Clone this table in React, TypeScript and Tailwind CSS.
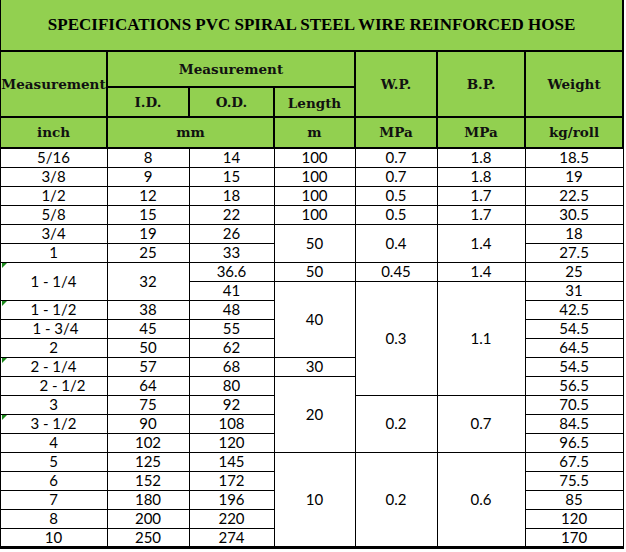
type Cell = { v: string; rs?: number; cls?: string; mark?: boolean } | null;

const c = (v: string, rs?: number): Cell => ({ v, rs });

// inch, I.D., O.D., Length, W.P., B.P., Weight
const rows: Cell[][] = [
  [c("5/16"), c("8"), c("14"), c("100"), c("0.7"), c("1.8"), c("18.5")],
  [c("3/8"), c("9"), c("15"), c("100"), c("0.7"), c("1.8"), c("19")],
  [c("1/2"), c("12"), c("18"), c("100"), c("0.5"), c("1.7"), c("22.5")],
  [c("5/8"), c("15"), c("22"), c("100"), c("0.5"), c("1.7"), c("30.5")],
  [c("3/4"), c("19"), c("26"), c("50", 2), c("0.4", 2), c("1.4", 2), c("18")],
  [c("1"), c("25"), c("33"), null, null, null, c("27.5")],
  [{ v: "1 - 1/4", rs: 2, mark: true }, c("32", 2), c("36.6"), c("50"), c("0.45"), c("1.4"), c("25")],
  [null, null, c("41"), c("40", 4), c("0.3", 6), c("1.1", 6), c("31")],
  [{ v: "1 - 1/2", mark: true }, c("38"), c("48"), null, null, null, c("42.5")],
  [{ v: "1 - 3/4", cls: "pl-[4px]" }, c("45"), c("55"), null, null, null, c("54.5")],
  [c("2"), c("50"), c("62"), null, null, null, c("64.5")],
  [{ v: "2 - 1/4", mark: true }, c("57"), c("68"), c("30"), null, null, c("54.5")],
  [{ v: "2 - 1/2", cls: "pl-[18px]" }, c("64"), c("80"), c("20", 4), null, null, c("56.5")],
  [c("3"), c("75"), c("92"), null, c("0.2", 3), c("0.7", 3), c("70.5")],
  [{ v: "3 - 1/2", mark: true }, c("90"), c("108"), null, null, null, c("84.5")],
  [c("4"), c("102"), c("120"), null, null, null, c("96.5")],
  [c("5"), c("125"), c("145"), c("10", 5), c("0.2", 5), c("0.6", 5), c("67.5")],
  [c("6"), c("152"), c("172"), null, null, null, c("75.5")],
  [c("7"), c("180"), c("196"), null, null, null, c("85")],
  [c("8"), c("200"), c("220"), null, null, null, c("120")],
  [c("10"), c("250"), c("274"), null, null, null, c("170")],
];

const head = "border-2 border-black bg-[#92d050] text-center align-middle font-bold text-[#111] p-0";

export default function App() {
  return (
    <div className="w-[626px] h-[552px] overflow-hidden bg-white">
      <table
        className="table-fixed border-collapse w-[623px] -ml-px"
        style={{ fontFamily: "Lato, 'Open Sans', sans-serif" }}
      >
        <colgroup>
          <col className="w-[107px]" />
          <col className="w-[82px]" />
          <col className="w-[85px]" />
          <col className="w-[81px]" />
          <col className="w-[82px]" />
          <col className="w-[88px]" />
          <col className="w-[98px]" />
        </colgroup>
        <thead className="font-['DejaVu_Serif',serif] text-[13.5px]">
          <tr className="h-[51px]">
            <th
              colSpan={7}
              className="border-2 border-t-0 border-black bg-[#92d050] text-center align-middle font-bold text-black p-0 pb-px font-['Liberation_Serif',serif] text-[17px]"
            >
              SPECIFICATIONS PVC SPIRAL STEEL WIRE REINFORCED HOSE
            </th>
          </tr>
          <tr className="h-[36px]">
            <th rowSpan={2} className={head}>Measurement</th>
            <th colSpan={3} className={head}>Measurement</th>
            <th rowSpan={2} className={head}>W.P.</th>
            <th rowSpan={2} className={head}>B.P.</th>
            <th rowSpan={2} className={head}>Weight</th>
          </tr>
          <tr className="h-[30px]">
            <th className={head}>I.D.</th>
            <th className={head}>O.D.</th>
            <th className={`${head} pt-[3px]`}>Length</th>
          </tr>
          <tr className="h-[31px]">
            <th className={head}>inch</th>
            <th colSpan={2} className={head}>mm</th>
            <th className={head}>m</th>
            <th className={head}>MPa</th>
            <th className={head}>MPa</th>
            <th className={head}>kg/roll</th>
          </tr>
        </thead>
        <tbody className="text-[15px] text-black">
          {rows.map((r, i) => (
            <tr key={i} className="h-[19px]">
              {r.map((cell, j) =>
                cell ? (
                  <td
                    key={j}
                    rowSpan={cell.rs}
                    className={`relative border border-black p-0 text-center align-middle leading-[17px] ${
                      i === rows.length - 1 || (cell.rs && i + cell.rs === rows.length) ? "border-b-[3px]" : ""
                    } ${cell.cls ?? ""}`}
                  >
                    {cell.mark ? (
                      <span className="absolute left-px top-0 w-0 h-0 border-t-[5px] border-r-[5px] border-t-[#1b8a1b] border-r-transparent" />
                    ) : null}
                    {cell.v}
                  </td>
                ) : null
              )}
            </tr>
          ))}
        </tbody>
      </table>
    </div>
  );
}
